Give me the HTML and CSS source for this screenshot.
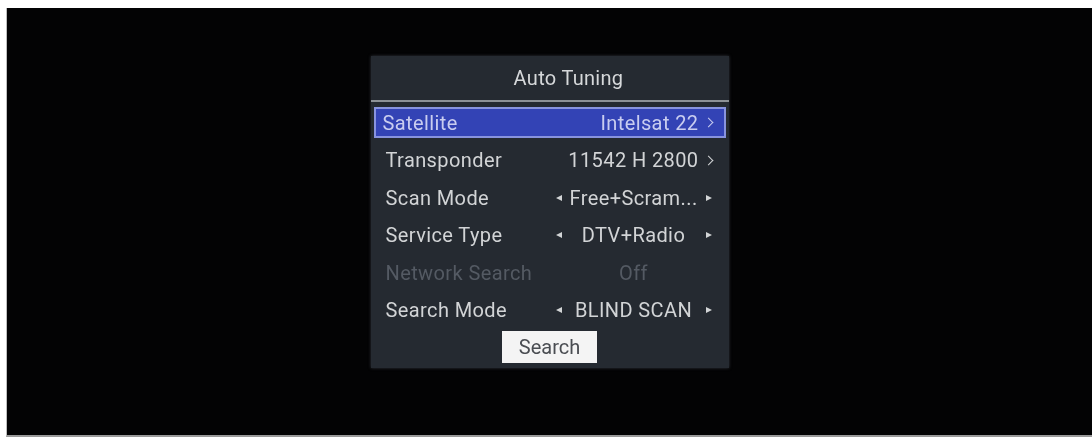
FILE: index.html
```html
<!DOCTYPE html>
<html lang="en">
<head>
    <meta charset="UTF-8">
    <title>Auto Tuning</title>
    <link rel="stylesheet" href="styles.css">
</head>
<body>
<div class="screen">
    <div class="menu">
        <div class="menu-title">Auto Tuning</div>
        <ul class="menu-list">
            <li class="menu-row selected">
                <span class="label">Satellite</span>
                <span class="value link">Intelsat 22 <i class="chevron"></i></span>
            </li>
            <li class="menu-row">
                <span class="label">Transponder</span>
                <span class="value link">11542 H 2800 <i class="chevron"></i></span>
            </li>
            <li class="menu-row">
                <span class="label">Scan Mode</span>
                <span class="value option"><i class="tri left"></i><em>Free+Scram...</em><i class="tri right"></i></span>
            </li>
            <li class="menu-row">
                <span class="label">Service Type</span>
                <span class="value option"><i class="tri left"></i><em>DTV+Radio</em><i class="tri right"></i></span>
            </li>
            <li class="menu-row disabled">
                <span class="label">Network Search</span>
                <span class="value option"><i></i><em>Off</em><i></i></span>
            </li>
            <li class="menu-row">
                <span class="label">Search Mode</span>
                <span class="value option"><i class="tri left"></i><em>BLIND SCAN</em><i class="tri right"></i></span>
            </li>
        </ul>
        <div class="menu-footer">
            <button class="search-btn">Search</button>
        </div>
    </div>
</div>
</body>
</html>
```

FILE: styles.css
```css
body {
    margin: 0;
    background: #ffffff;
    font-family: Roboto, 'Liberation Sans', sans-serif;
}

.screen {
    margin: 8px 0 0 6px;
    height: 429px;
    background: #030304;
    border-bottom: 2px solid #9a9a9a;
    border-left: 1px solid #bdbdbd;
    display: flex;
    justify-content: center;
    align-items: flex-start;
    padding-top: 48px;
    box-sizing: border-box;
}

.menu {
    width: 358px;
    height: 312px;
    background: #252a31;
    box-shadow: 0 0 3px rgba(80, 86, 96, 0.6);
    display: flex;
    flex-direction: column;
    filter: blur(0.3px);
}

.menu-title {
    height: 44px;
    line-height: 44px;
    text-align: center;
    padding-left: 38px;
    color: #d6d8da;
    font-size: 20px;
    letter-spacing: 0.3px;
    border-bottom: 2px solid #8d9196;
}

.menu-list {
    list-style: none;
    margin: 5px 0 0;
    padding: 0 3px;
    display: flex;
    flex-direction: column;
    gap: 6.6px;
}

.menu-row {
    box-sizing: border-box;
    height: 31px;
    display: flex;
    align-items: center;
    justify-content: space-between;
    padding: 0 10px 0 11px;
    border: 1px solid transparent;
    color: #d2d4d6;
    font-size: 20px;
    letter-spacing: 0.4px;
}

.menu-row.selected {
    background: #3343b5;
    border: 2px solid #8893de;
    padding: 0 9px 0 7px;
    color: #c9cdf0;
}

.menu-row.disabled {
    color: #545a63;
}

.value {
    display: flex;
    align-items: center;
}

.value.link {
    gap: 6px;
}

.value.option {
    width: 162px;
    justify-content: space-between;
}

.value em {
    font-style: normal;
    flex: 1;
    text-align: center;
}

.value i {
    width: 7px;
    flex: none;
}

.chevron {
    display: inline-block;
    width: 6px !important;
    height: 6px;
    border-right: 1.5px solid currentColor;
    border-top: 1.5px solid currentColor;
    transform: rotate(45deg);
    margin-right: 3px;
}

.tri {
    height: 0;
    width: 0 !important;
    border-top: 3px solid transparent;
    border-bottom: 3px solid transparent;
}

.tri.left {
    border-right: 6px solid #d2d4d6;
    margin-left: 3px;
}

.tri.right {
    border-left: 6px solid #d2d4d6;
    margin-right: 3px;
}

.menu-footer {
    display: flex;
    justify-content: center;
    margin-top: 5px;
}

.search-btn {
    width: 95px;
    height: 32px;
    border: none;
    background: #f4f4f4;
    color: #4a4d52;
    font-family: Roboto, 'Liberation Sans', sans-serif;
    font-size: 20px;
    padding: 0;
}
```
